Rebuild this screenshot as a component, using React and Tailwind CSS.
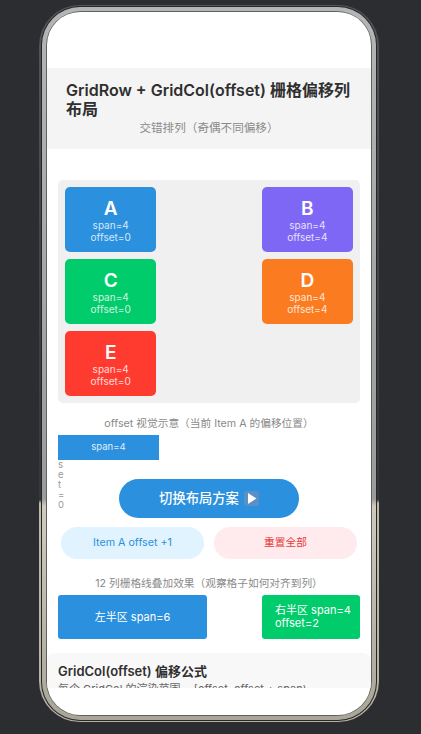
const SANS = "font-['Inter','Noto_Sans_CJK_SC',sans-serif]";

function GridCard({ letter, offset, color, start }) {
  return (
    <div className={`col-span-4 ${start} h-[65px] rounded-[5px] ${color} flex flex-col items-center justify-center text-white`}>
      <div className="text-[19px] leading-[23px] font-semibold">{letter}</div>
      <div className="text-[10px] leading-[12px] opacity-80 -mt-[1px]">span=4</div>
      <div className="text-[10px] leading-[12px] opacity-80">offset={offset}</div>
    </div>
  );
}

function PlayEmoji() {
  return (
    <svg width="15" height="15" viewBox="0 0 15 15" className="ml-[5px]">
      <rect width="15" height="15" rx="2.5" fill="#5b8fc7" />
      <path d="M4 2 L12.5 7.5 L4 13 Z" fill="#fff" />
    </svg>
  );
}

export default function App() {
  return (
    <div className={`w-[421px] h-[734px] bg-[#2c2d30] pt-[5px] pl-[39px] overflow-hidden ${SANS}`}>
      {/* phone frame */}
      <div className="w-[340px] h-[717px] rounded-[41px] px-[2px] py-[1px] bg-[linear-gradient(180deg,#55565a_0%,#35363a_69%,#bfb9a8_69.5%,#b8b2a0_100%)]">
        <div className="h-full rounded-[39px] p-[1px] bg-[#26272a]">
          <div className="h-full rounded-[38px] px-[4px] py-[4px] bg-[linear-gradient(180deg,#b5b5b5_0%,#9b9b9b_69%,#cfcabb_70%,#a9a597_100%)]">
            <div className="h-full rounded-[35px] p-[1px] bg-[#5f6063]">
              <div className="h-full rounded-[33px] bg-white overflow-hidden flex flex-col">
                <div className="flex-1 min-h-0 overflow-hidden">
                  <div className="h-[56px]" />
                  <div className="h-[81px] bg-[#f4f4f4] px-[19px] pt-[13px]">
                    <div className="text-[16px] leading-[19px] font-semibold text-[#2f2f2f]">
                      GridRow + GridCol(offset) 栅格偏移列布局
                    </div>
                    <div className="text-center text-[11.6px] leading-[18px] text-[#8a8a8a]">交错排列（奇偶不同偏移）</div>
                  </div>

                  <div className="px-[11px] pt-[31px]">
                    <div className="bg-[#f0f0f0] rounded-[5px] p-[7px] grid grid-cols-12 gap-[7px]">
                      <GridCard letter="A" offset="0" color="bg-[#2b90de]" start="col-start-1" />
                      <GridCard letter="B" offset="4" color="bg-[#7f67f5]" start="col-start-9" />
                      <GridCard letter="C" offset="0" color="bg-[#00cc6c]" start="col-start-1" />
                      <GridCard letter="D" offset="4" color="bg-[#fb7c20]" start="col-start-9" />
                      <GridCard letter="E" offset="0" color="bg-[#ff3b30]" start="col-start-1" />
                    </div>

                    <div className="mt-[13px] text-center text-[10.7px] leading-[16px] text-[#8a8a8a]">
                      offset 视觉示意（当前 Item A 的偏移位置）
                    </div>
                    <div className="relative mt-[3px] h-[25px]">
                      <div className="w-[101px] h-[25px] bg-[#2b90de] flex items-center justify-center text-[9.5px] text-white/85">
                        span=4
                      </div>
                      <div className="absolute left-0 top-[25px] w-[6px] break-all text-[9.5px] leading-[10px] text-[#999]">
                        set=0
                      </div>
                    </div>

                    <div className="mt-[19px] flex justify-center">
                      <div className="w-[180px] h-[39px] rounded-full bg-[#2b90de] flex items-center justify-center text-white text-[13.3px] font-medium">
                        切换布局方案
                        <PlayEmoji />
                      </div>
                    </div>

                    <div className="mt-[9px] px-[3px] flex gap-[10px]">
                      <div className="flex-1 h-[32px] rounded-full bg-[#e1f3fe] flex items-center justify-center text-[10.7px] text-[#2b90de]">
                        Item A offset +1
                      </div>
                      <div className="flex-1 h-[32px] rounded-full bg-[#ffebee] flex items-center justify-center text-[10.7px] text-[#e53935]">
                        重置全部
                      </div>
                    </div>

                    <div className="mt-[17px] text-center text-[10.7px] leading-[16px] text-[#8a8a8a]">
                      12 列栅格线叠加效果（观察格子如何对齐到列）
                    </div>
                    <div className="mt-[3px] flex justify-between">
                      <div className="w-[149px] h-[44px] rounded-[3px] bg-[#2b90de] flex items-center justify-center text-[11px] text-white">
                        左半区 span=6
                      </div>
                      <div className="w-[98px] h-[44px] rounded-[3px] bg-[#00cc6c] flex items-center pl-[13px] text-[11px] leading-[13px] text-white">
                        右半区 span=4 offset=2
                      </div>
                    </div>
                  </div>

                  <div className="mt-[14px] bg-[#f8f8f8] rounded-t-[8px] px-[11px] pt-[9px] h-[60px]">
                    <div className="text-[13px] leading-[18px] font-semibold text-[#2f2f2f]">GridCol(offset) 偏移公式</div>
                    <div className="mt-[1px] text-[11px] leading-[16px] text-[#666] whitespace-nowrap">
                      每个 GridCol 的渲染范围 = [offset, offset + span)
                    </div>
                  </div>
                </div>
                <div className="h-[27px] shrink-0" />
              </div>
            </div>
          </div>
        </div>
      </div>
    </div>
  );
}
